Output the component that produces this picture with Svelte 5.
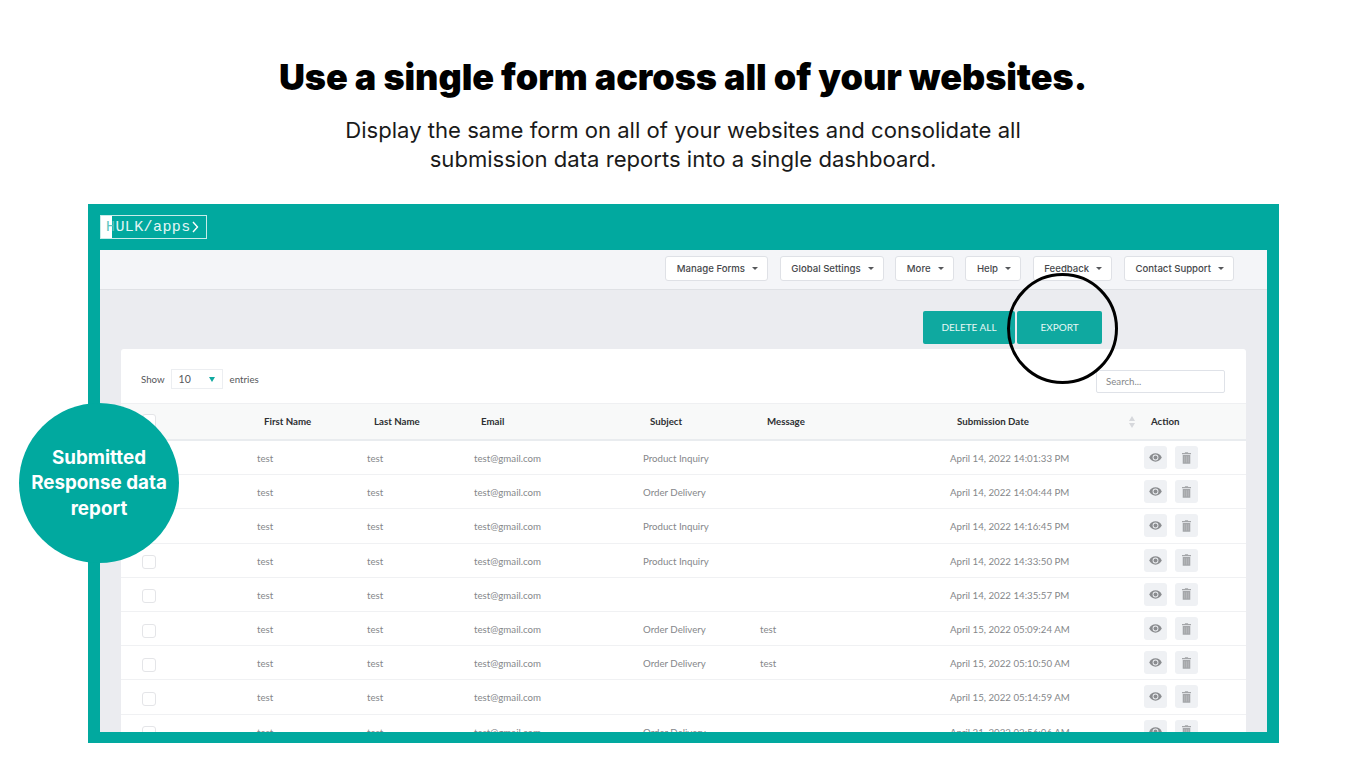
<script>
  const menus = ['Manage Forms', 'Global Settings', 'More', 'Help', 'Feedback', 'Contact Support'];

  const rows = [
    { subject: 'Product Inquiry', message: '', date: 'April 14, 2022 14:01:33 PM' },
    { subject: 'Order Delivery', message: '', date: 'April 14, 2022 14:04:44 PM' },
    { subject: 'Product Inquiry', message: '', date: 'April 14, 2022 14:16:45 PM' },
    { subject: 'Product Inquiry', message: '', date: 'April 14, 2022 14:33:50 PM' },
    { subject: '', message: '', date: 'April 14, 2022 14:35:57 PM' },
    { subject: 'Order Delivery', message: 'test', date: 'April 15, 2022 05:09:24 AM' },
    { subject: 'Order Delivery', message: 'test', date: 'April 15, 2022 05:10:50 AM' },
    { subject: '', message: '', date: 'April 15, 2022 05:14:59 AM' },
    { subject: 'Order Delivery', message: '', date: 'April 21, 2022 02:56:06 AM' }
  ];
</script>

<div class="page">
  <h1>Use a single form across all of your websites.</h1>
  <p class="lead">
    Display the same form on all of your websites and consolidate all<br />
    submission data reports into a single dashboard.
  </p>

  <div class="frame">
    <div class="brand">
      <div class="logo">
        <span class="logo-fill"></span>
        <span class="logo-text"><span class="logo-h">H</span>ULK/apps</span>
        <svg class="logo-chev" viewBox="0 0 7 12" width="7" height="12"><path d="M1 1l4.500 5L1 11" fill="none" stroke="#fff" stroke-width="1.400" /></svg>
      </div>
    </div>

    <div class="app">
      <div class="toolbar">
        {#each menus as m}
          <button class="menu">{m}<span class="caret"></span></button>
        {/each}
      </div>

      <div class="content">
        <div class="actions">
          <button class="primary del">DELETE ALL</button>
          <button class="primary exp">EXPORT</button>
        </div>

        <div class="card">
          <div class="filters">
            <span>Show</span>
            <div class="select"><span>10</span><span class="select-caret"></span></div>
            <span>entries</span>
            <div class="search">Search...</div>
          </div>

          <div class="row head">
            <div><span class="check"></span></div>
            <div>First Name</div>
            <div>Last Name</div>
            <div>Email</div>
            <div>Subject</div>
            <div>Message</div>
            <div class="date-head">
              Submission Date
              <svg class="sort" viewBox="0 0 6 12" width="6" height="12"><path d="M3 0l3 5H0zM3 12L0 7h6z" fill="#d6d8dc" /></svg>
            </div>
            <div>Action</div>
          </div>

          {#each rows as r}
            <div class="row">
              <div><span class="check"></span></div>
              <div>test</div>
              <div>test</div>
              <div>test@gmail.com</div>
              <div>{r.subject}</div>
              <div>{r.message}</div>
              <div>{r.date}</div>
              <div class="btns">
                <span class="icon-btn">
                  <svg viewBox="0 0 14 10" width="13" height="9">
                    <path d="M0 5c1.600-3 4-4.600 7-4.600S12.400 2 14 5c-1.600 3-4 4.600-7 4.600S1.600 8 0 5z" fill="#8b8d90" />
                    <circle cx="7" cy="5" r="3.200" fill="#eef0f3" />
                    <circle cx="7" cy="5" r="2.200" fill="#8b8d90" />
                  </svg>
                </span>
                <span class="icon-btn">
                  <svg viewBox="0 0 10 13" width="9" height="12">
                    <path d="M3.500 0h3l.5 1h3v1.300H0V1h3zM.8 3.200h8.400V13H.8z" fill="#a4a6a9" />
                    <path d="M3 4.500v7M5 4.500v7M7 4.500v7" stroke="#c4c6c9" stroke-width=".6" />
                  </svg>
                </span>
              </div>
            </div>
          {/each}
        </div>
      </div>
    </div>

    <div class="ring"></div>
    <div class="badge">Submitted<br />Response data<br />report</div>
  </div>
</div>

<style>
  :global(body) {
    margin: 0;
    background: #fff;
  }

  .page {
    width: 1366px;
    height: 768px;
    overflow: hidden;
    padding-top: 55px;
    box-sizing: border-box;
    font-family: "Lato", sans-serif;
  }

  h1 {
    margin: 0;
    text-align: center;
    font-family: "Inter", sans-serif;
    font-weight: 900;
    font-size: 36px;
    line-height: 44px;
    letter-spacing: -0.06px;
    color: #000;
  }

  .lead {
    margin: 17px 0 0;
    text-align: center;
    font-family: "Inter", sans-serif;
    font-size: 22.100px;
    line-height: 29px;
    color: #1a1a1a;
  }

  .frame {
    position: relative;
    margin: 30px 87px 0 88px;
    height: 539px;
    background: #01a99f;
    padding: 0 12px 11px;
    box-sizing: border-box;
    display: flex;
    flex-direction: column;
  }

  .brand {
    height: 46px;
    display: flex;
    align-items: center;
    flex: none;
  }

  .logo {
    position: relative;
    width: 107px;
    height: 24px;
    box-sizing: border-box;
    border: 1px solid #c8ece9;
    display: flex;
    align-items: center;
    padding-left: 5px;
    color: #fff;
  }

  .logo-fill {
    position: absolute;
    left: 0;
    top: 0;
    bottom: 0;
    width: 11px;
    background: #fff;
  }

  .logo-text {
    position: relative;
    font-family: "Liberation Mono", monospace;
    font-size: 15px;
    letter-spacing: 0.400px;
    color: #e4f6f5;
  }

  .logo-h {
    color: #5cc6c0;
  }

  .logo-chev {
    margin-left: 1px;
  }

  .app {
    flex: 1;
    min-height: 0;
    overflow: hidden;
    background: #ebecf0;
    display: flex;
    flex-direction: column;
  }

  .toolbar {
    height: 40px;
    flex: none;
    box-sizing: border-box;
    background: #f4f5f8;
    border-bottom: 1px solid #dfe1e5;
    display: flex;
    justify-content: flex-end;
    align-items: flex-start;
    gap: 11.800px;
    padding: 6px 33px 0 0;
  }

  .menu {
    height: 25px;
    box-sizing: border-box;
    background: #fff;
    border: 1px solid #dfe1e6;
    border-radius: 3px;
    padding: 0 9px 0 10.500px;
    font-family: "Inter", sans-serif;
    font-size: 9.600px;
    font-weight: 500;
    color: #46484b;
    display: flex;
    align-items: center;
    gap: 7px;
    white-space: nowrap;
  }

  .caret {
    width: 0;
    height: 0;
    border-left: 3px solid transparent;
    border-right: 3px solid transparent;
    border-top: 3.500px solid #55575a;
  }

  .content {
    flex: 1;
    min-height: 0;
    padding: 21px 21px 0;
    display: flex;
    flex-direction: column;
  }

  .actions {
    display: flex;
    justify-content: flex-end;
    gap: 2px;
    padding-right: 144px;
    flex: none;
  }

  .primary {
    height: 33px;
    border: 0;
    border-radius: 2px;
    background: #0fa9a0;
    color: #e6f7f5;
    font-family: "Lato", sans-serif;
    font-size: 10px;
    padding: 0 0 2px;
  }

  .del {
    width: 92px;
  }

  .exp {
    width: 85px;
  }

  .card {
    margin-top: 5px;
    background: #fff;
    border-radius: 3px 3px 0 0;
    flex: none;
  }

  .filters {
    height: 54px;
    box-sizing: border-box;
    position: relative;
    display: flex;
    align-items: center;
    padding: 6px 0 0 20px;
    font-size: 9.700px;
    color: #55575a;
  }

  .select {
    width: 52px;
    height: 20px;
    box-sizing: border-box;
    margin: 0 7px 0 6px;
    border: 1px solid #eceef1;
    padding: 0 7px;
    display: flex;
    align-items: center;
    justify-content: space-between;
    font-size: 10.500px;
  }

  .select-caret {
    width: 0;
    height: 0;
    border-left: 3.500px solid transparent;
    border-right: 3.500px solid transparent;
    border-top: 5px solid #0fa9a0;
  }

  .search {
    position: absolute;
    left: 975px;
    top: 21px;
    width: 129px;
    height: 23px;
    box-sizing: border-box;
    border: 1px solid #dfe2e8;
    border-radius: 2px;
    padding-left: 9px;
    line-height: 21px;
    font-size: 9.700px;
    color: #85878a;
  }

  .row {
    display: grid;
    grid-template-columns: 136px 110px 107px 169px 117px 190px 194px 102px;
    height: 34.200px;
    box-sizing: border-box;
    align-items: center;
    padding-top: 1px;
    border-bottom: 1px solid #f0f1f3;
    font-size: 9.700px;
    color: #85878a;
    white-space: nowrap;
  }

  .row > div:first-child {
    padding-left: 21px;
    padding-top: 3px;
    display: flex;
    align-items: center;
  }

  .head {
    height: 38px;
    padding-top: 0;
    padding-bottom: 1px;
    background: #f8f9f9;
    border-top: 1px solid #eff0f2;
    border-bottom: 2px solid #e9ecef;
    font-weight: 700;
    color: #2e3033;
  }

  .head > div:first-child {
    padding-top: 0;
  }

  .head > div:not(:first-child) {
    padding-left: 7px;
  }

  .date-head {
    position: relative;
  }

  .sort {
    position: absolute;
    right: 9px;
    top: 1px;
  }

  .check {
    width: 14px;
    height: 14px;
    box-sizing: border-box;
    border: 1px solid #e4e5e8;
    border-radius: 3px;
    background: #fff;
  }

  .btns {
    display: flex;
    gap: 8px;
    margin-top: -1px;
  }

  .icon-btn {
    width: 23px;
    height: 23px;
    border-radius: 3px;
    background: #eff1f4;
    display: flex;
    align-items: center;
    justify-content: center;
  }

  .ring {
    position: absolute;
    left: 919px;
    top: 69px;
    width: 111px;
    height: 111px;
    box-sizing: border-box;
    border: 3.500px solid #000;
    border-radius: 50%;
  }

  .badge {
    position: absolute;
    left: -69px;
    top: 199px;
    width: 160px;
    height: 160px;
    border-radius: 50%;
    background: #01a99f;
    color: #fff;
    display: flex;
    align-items: center;
    justify-content: center;
    text-align: center;
    font-family: "Inter", sans-serif;
    font-weight: 700;
    font-size: 18.800px;
    line-height: 25.500px;
  }
</style>
